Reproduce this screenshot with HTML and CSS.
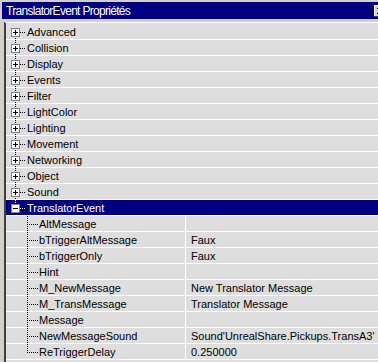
FILE: index.html
```html
<!DOCTYPE html>
<html>
<head>
<meta charset="utf-8">
<link rel="stylesheet" href="styles.css">
</head>
<body>
<div class="window">
  <div class="titlebar">
    <span class="title">TranslatorEvent Propriétés</span>
    <span class="close"><svg width="16" height="14" viewBox="0 0 16 14"><path d="M4 4 L10 10 M10 4 L4 10 M5 4 L11 10 M11 4 L5 10" stroke="#000" stroke-width="1" fill="none"/></svg></span>
  </div>
  <div class="list">
    <div class="row cat">
      <svg class="tree" width="21" height="16"><line x1="9.5" y1="8" x2="9.5" y2="16" class="dot"/><line x1="14" y1="8.5" x2="20" y2="8.5" class="dot"/><rect x="5.5" y="4.5" width="8" height="8" class="box"/><path d="M7 8.5H12M9.5 6V11" class="sign"/></svg>
      <span class="label">Advanced</span>
    </div>
    <div class="row cat">
      <svg class="tree" width="21" height="16"><line x1="9.5" y1="0" x2="9.5" y2="16" class="dot"/><line x1="14" y1="8.5" x2="20" y2="8.5" class="dot"/><rect x="5.5" y="4.5" width="8" height="8" class="box"/><path d="M7 8.5H12M9.5 6V11" class="sign"/></svg>
      <span class="label">Collision</span>
    </div>
    <div class="row cat">
      <svg class="tree" width="21" height="16"><line x1="9.5" y1="0" x2="9.5" y2="16" class="dot"/><line x1="14" y1="8.5" x2="20" y2="8.5" class="dot"/><rect x="5.5" y="4.5" width="8" height="8" class="box"/><path d="M7 8.5H12M9.5 6V11" class="sign"/></svg>
      <span class="label">Display</span>
    </div>
    <div class="row cat">
      <svg class="tree" width="21" height="16"><line x1="9.5" y1="0" x2="9.5" y2="16" class="dot"/><line x1="14" y1="8.5" x2="20" y2="8.5" class="dot"/><rect x="5.5" y="4.5" width="8" height="8" class="box"/><path d="M7 8.5H12M9.5 6V11" class="sign"/></svg>
      <span class="label">Events</span>
    </div>
    <div class="row cat">
      <svg class="tree" width="21" height="16"><line x1="9.5" y1="0" x2="9.5" y2="16" class="dot"/><line x1="14" y1="8.5" x2="20" y2="8.5" class="dot"/><rect x="5.5" y="4.5" width="8" height="8" class="box"/><path d="M7 8.5H12M9.5 6V11" class="sign"/></svg>
      <span class="label">Filter</span>
    </div>
    <div class="row cat">
      <svg class="tree" width="21" height="16"><line x1="9.5" y1="0" x2="9.5" y2="16" class="dot"/><line x1="14" y1="8.5" x2="20" y2="8.5" class="dot"/><rect x="5.5" y="4.5" width="8" height="8" class="box"/><path d="M7 8.5H12M9.5 6V11" class="sign"/></svg>
      <span class="label">LightColor</span>
    </div>
    <div class="row cat">
      <svg class="tree" width="21" height="16"><line x1="9.5" y1="0" x2="9.5" y2="16" class="dot"/><line x1="14" y1="8.5" x2="20" y2="8.5" class="dot"/><rect x="5.5" y="4.5" width="8" height="8" class="box"/><path d="M7 8.5H12M9.5 6V11" class="sign"/></svg>
      <span class="label">Lighting</span>
    </div>
    <div class="row cat">
      <svg class="tree" width="21" height="16"><line x1="9.5" y1="0" x2="9.5" y2="16" class="dot"/><line x1="14" y1="8.5" x2="20" y2="8.5" class="dot"/><rect x="5.5" y="4.5" width="8" height="8" class="box"/><path d="M7 8.5H12M9.5 6V11" class="sign"/></svg>
      <span class="label">Movement</span>
    </div>
    <div class="row cat">
      <svg class="tree" width="21" height="16"><line x1="9.5" y1="0" x2="9.5" y2="16" class="dot"/><line x1="14" y1="8.5" x2="20" y2="8.5" class="dot"/><rect x="5.5" y="4.5" width="8" height="8" class="box"/><path d="M7 8.5H12M9.5 6V11" class="sign"/></svg>
      <span class="label">Networking</span>
    </div>
    <div class="row cat">
      <svg class="tree" width="21" height="16"><line x1="9.5" y1="0" x2="9.5" y2="16" class="dot"/><line x1="14" y1="8.5" x2="20" y2="8.5" class="dot"/><rect x="5.5" y="4.5" width="8" height="8" class="box"/><path d="M7 8.5H12M9.5 6V11" class="sign"/></svg>
      <span class="label">Object</span>
    </div>
    <div class="row cat">
      <svg class="tree" width="21" height="16"><line x1="9.5" y1="0" x2="9.5" y2="16" class="dot"/><line x1="14" y1="8.5" x2="20" y2="8.5" class="dot"/><rect x="5.5" y="4.5" width="8" height="8" class="box"/><path d="M7 8.5H12M9.5 6V11" class="sign"/></svg>
      <span class="label">Sound</span>
    </div>
    <div class="row cat selected">
      <svg class="tree" width="21" height="16"><line x1="9.5" y1="0" x2="9.5" y2="5" class="dot white"/><line x1="14" y1="8.5" x2="20" y2="8.5" class="dot white"/><rect x="5.5" y="4.5" width="8" height="8" class="box"/><path d="M7 8.5H12" class="sign"/></svg>
      <span class="label">TranslatorEvent</span>
    </div>
    <div class="row prop">
      <svg class="tree" width="33" height="16"><line x1="21.5" y1="0" x2="21.5" y2="16" class="dot"/><line x1="23" y1="8.5" x2="32" y2="8.5" class="dot"/></svg>
      <span class="name">AltMessage</span><span class="value"></span>
    </div>
    <div class="row prop">
      <svg class="tree" width="33" height="16"><line x1="21.5" y1="0" x2="21.5" y2="16" class="dot"/><line x1="23" y1="8.5" x2="32" y2="8.5" class="dot"/></svg>
      <span class="name">bTriggerAltMessage</span><span class="value">Faux</span>
    </div>
    <div class="row prop">
      <svg class="tree" width="33" height="16"><line x1="21.5" y1="0" x2="21.5" y2="16" class="dot"/><line x1="23" y1="8.5" x2="32" y2="8.5" class="dot"/></svg>
      <span class="name">bTriggerOnly</span><span class="value">Faux</span>
    </div>
    <div class="row prop">
      <svg class="tree" width="33" height="16"><line x1="21.5" y1="0" x2="21.5" y2="16" class="dot"/><line x1="23" y1="8.5" x2="32" y2="8.5" class="dot"/></svg>
      <span class="name">Hint</span><span class="value"></span>
    </div>
    <div class="row prop">
      <svg class="tree" width="33" height="16"><line x1="21.5" y1="0" x2="21.5" y2="16" class="dot"/><line x1="23" y1="8.5" x2="32" y2="8.5" class="dot"/></svg>
      <span class="name">M_NewMessage</span><span class="value">New Translator Message</span>
    </div>
    <div class="row prop">
      <svg class="tree" width="33" height="16"><line x1="21.5" y1="0" x2="21.5" y2="16" class="dot"/><line x1="23" y1="8.5" x2="32" y2="8.5" class="dot"/></svg>
      <span class="name">M_TransMessage</span><span class="value">Translator Message</span>
    </div>
    <div class="row prop">
      <svg class="tree" width="33" height="16"><line x1="21.5" y1="0" x2="21.5" y2="16" class="dot"/><line x1="23" y1="8.5" x2="32" y2="8.5" class="dot"/></svg>
      <span class="name">Message</span><span class="value"></span>
    </div>
    <div class="row prop">
      <svg class="tree" width="33" height="16"><line x1="21.5" y1="0" x2="21.5" y2="16" class="dot"/><line x1="23" y1="8.5" x2="32" y2="8.5" class="dot"/></svg>
      <span class="name">NewMessageSound</span><span class="value">Sound'UnrealShare.Pickups.TransA3'</span>
    </div>
    <div class="row prop">
      <svg class="tree" width="33" height="16"><line x1="21.5" y1="0" x2="21.5" y2="9" class="dot"/><line x1="23" y1="8.5" x2="32" y2="8.5" class="dot"/></svg>
      <span class="name">ReTriggerDelay</span><span class="value">0.250000</span>
    </div>
  </div>
</div>
</body>
</html>
```

FILE: styles.css
```css
html, body {
  margin: 0;
  padding: 0;
}
body {
  background: #d4d0c8;
  font-family: "Liberation Sans", Arial, sans-serif;
  font-size: 11px;
  color: #000;
}
.window {
  width: 378px;
  height: 362px;
  overflow: hidden;
}
.titlebar {
  margin: 2px 0 0 2px;
  height: 17px;
  background: #000080;
  color: #fff;
  display: flex;
  align-items: center;
  padding-left: 4px;
  font-size: 12px;
  letter-spacing: -0.7px;
  overflow: hidden;
}
.title {
  flex: 1;
  white-space: nowrap;
}
.close {
  flex: none;
  width: 16px;
  height: 12px;
  margin-right: -12px;
  background: #d4d0c8;
  box-shadow: inset -1px -1px #404040, inset 1px 1px #fff;
  display: flex;
}
.close svg {
  display: block;
  margin: -1px 0 0 -1px;
}
.list {
  margin: 3px 0 0 4px;
  border-left: 2px solid #404040;
  border-top: 1px solid #fff;
  padding-top: 1px;
  background: #dedede;
  height: 400px;
}
.row {
  display: flex;
  height: 16px;
  background: linear-gradient(#dedede 15px, #fff 15px);
  line-height: 15px;
  white-space: nowrap;
}
.tree {
  display: block;
  flex: none;
}
.dot {
  stroke: #000;
  stroke-width: 1;
  stroke-dasharray: 1 1;
}
.dot.white {
  stroke: #fff;
}
.box {
  fill: #fff;
  stroke: #808080;
  stroke-width: 1;
}
.sign {
  stroke: #000;
  stroke-width: 1;
  fill: none;
}
.label {
  flex: 1;
  padding-top: 1px;
}
.selected {
  background: linear-gradient(#000080 15px, #fff 15px);
  color: #fff;
}
.name {
  width: 146px;
  flex: none;
  padding-top: 1px;
}
.value {
  flex: 1;
  border-left: 1px solid #fff;
  padding-left: 5px;
  padding-top: 1px;
}
```
